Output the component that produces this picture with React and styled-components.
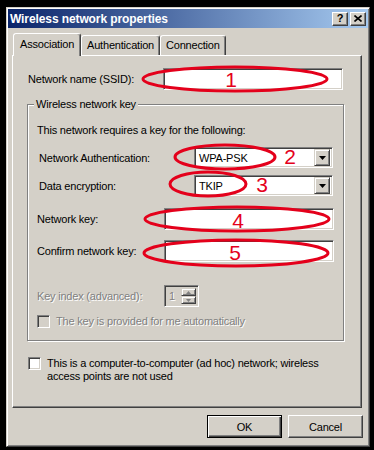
import styled, { createGlobalStyle } from 'styled-components';

const GlobalStyle = createGlobalStyle`
  html, body { margin: 0; padding: 0; background: #000; }
  body {
    font-family: "Liberation Sans", Arial, sans-serif;
    font-size: 11px;
    letter-spacing: -0.2px;
    color: #000;
  }
  * { box-sizing: border-box; }
`;

const Stage = styled.div`
  position: relative;
  width: 374px;
  height: 450px;
  background: #000;
  padding: 7px 4px 3px 6px;
`;

const Window = styled.div`
  width: 364px;
  height: 440px;
  background: #d4d0c8;
  border: 1px solid;
  border-color: #d4d0c8 #404040 #404040 #d4d0c8;
  box-shadow: inset 1px 1px #fff, inset -1px -1px #808080;
  padding: 1px;
  display: flex;
  flex-direction: column;
`;

const TitleBar = styled.div`
  height: 19px;
  display: flex;
  align-items: center;
  padding: 0 2px 0 2px;
  background: linear-gradient(to right, #0a246a, #a6caf0);
`;

const Title = styled.div`
  flex: 1;
  color: #fff;
  font-weight: bold;
  font-size: 12px;
  letter-spacing: -0.1px;
`;

const TitleButton = styled.div`
  width: 16px;
  height: 14px;
  margin-left: 2px;
  background: #d4d0c8;
  border: 1px solid;
  border-color: #fff #404040 #404040 #fff;
  box-shadow: inset -1px -1px #808080;
  display: flex;
  align-items: center;
  justify-content: center;
  font-weight: bold;
  font-size: 11px;
  line-height: 1;
`;

const Body = styled.div`
  padding: 6px 5px 0 4px;
  display: flex;
  flex-direction: column;
`;

const TabRow = styled.div`
  display: flex;
  align-items: flex-end;
  height: 22px;
  padding-left: 1px;
  position: relative;
  z-index: 1;
  margin-bottom: -1px;
`;

const Tab = styled.div`
  height: ${p => (p.$active ? '23px' : '20px')};
  padding: ${p => (p.$active ? '3px 6px 0' : '2px 5px 0')};
  margin-bottom: ${p => (p.$active ? '0' : '1px')};
  background: #d4d0c8;
  border: 1px solid;
  border-bottom: none;
  border-color: #fff #404040 transparent #fff;
  border-radius: 3px 3px 0 0;
  box-shadow: inset -1px 0 #808080;
  white-space: nowrap;
  font-size: 11px;
  line-height: 15px;
`;

const Panel = styled.div`
  width: 350px;
  height: 353px;
  background: #d4d0c8;
  border: 1px solid;
  border-color: #fff #404040 #404040 #fff;
  box-shadow: inset -1px -1px #808080;
  padding: 12px 16px 0 14px;
  display: flex;
  flex-direction: column;
`;

const Row = styled.div`
  display: flex;
  align-items: center;
  height: ${p => p.$h || 22}px;
  margin-top: ${p => p.$mt || 0}px;
`;

const Label = styled.div`
  width: ${p => p.$w}px;
  padding-left: ${p => p.$indent || 0}px;
  color: ${p => (p.$disabled ? '#808080' : '#000')};
  text-shadow: ${p => (p.$disabled ? '1px 1px #fff' : 'none')};
  white-space: nowrap;
`;

const TextBox = styled.div`
  width: ${p => p.$w}px;
  height: 22px;
  background: #fff;
  border: 1px solid;
  border-color: #808080 #fff #fff #808080;
  box-shadow: inset 1px 1px #404040, inset -1px -1px #d4d0c8;
`;

const Combo = styled(TextBox)`
  height: 21px;
  display: flex;
  align-items: center;
  padding: 0 2px 0 4px;
`;

const ComboText = styled.div`
  flex: 1;
`;

const DropButton = styled.div`
  width: 16px;
  height: 17px;
  background: #d4d0c8;
  border: 1px solid;
  border-color: #d4d0c8 #404040 #404040 #d4d0c8;
  box-shadow: inset 1px 1px #fff, inset -1px -1px #808080;
  display: flex;
  align-items: center;
  justify-content: center;
`;

const GroupBox = styled.div`
  margin-top: 14px;
  width: 317px;
  border: 1px solid #808080;
  box-shadow: inset 1px 1px #fff, 1px 1px #fff;
  padding: 0 9px 12px 9px;
  display: flex;
  flex-direction: column;
`;

const Legend = styled.div`
  align-self: flex-start;
  height: 13px;
  line-height: 13px;
  margin: -7px 0 0 -3px;
  padding: 0 2px;
  background: #d4d0c8;
`;

const Text = styled.div`
  line-height: 13px;
  margin-top: ${p => p.$mt || 0}px;
`;

const Spinner = styled.div`
  width: 35px;
  height: 22px;
  display: flex;
  background: #d4d0c8;
  border: 1px solid;
  border-color: #808080 #fff #fff #808080;
  box-shadow: inset 1px 1px #404040, inset -1px -1px #d4d0c8;
  padding: 2px;
`;

const SpinValue = styled.div`
  flex: 1;
  color: #808080;
  text-shadow: 1px 1px #fff;
  padding-left: 2px;
  line-height: 16px;
`;

const SpinButtons = styled.div`
  width: 15px;
  display: flex;
  flex-direction: column;
`;

const SpinButton = styled.div`
  flex: 1;
  background: #d4d0c8;
  border: 1px solid;
  border-color: #d4d0c8 #404040 #404040 #d4d0c8;
  box-shadow: inset 1px 1px #fff, inset -1px -1px #808080;
  display: flex;
  align-items: center;
  justify-content: center;
`;

const CheckRow = styled.div`
  display: flex;
  align-items: ${p => (p.$top ? 'flex-start' : 'center')};
  gap: 6px;
  margin-top: ${p => p.$mt || 0}px;
  margin-left: ${p => p.$ml || 0}px;
`;

const CheckBox = styled.div`
  flex: none;
  width: 13px;
  height: 13px;
  background: ${p => (p.$disabled ? '#d4d0c8' : '#fff')};
  border: 1px solid;
  border-color: #808080 #fff #fff #808080;
  box-shadow: inset 1px 1px #404040, inset -1px -1px #d4d0c8;
`;

const CheckText = styled.div`
  line-height: 13px;
  color: ${p => (p.$disabled ? '#808080' : '#000')};
  text-shadow: ${p => (p.$disabled ? '1px 1px #fff' : 'none')};
`;

const ButtonRow = styled.div`
  display: flex;
  justify-content: flex-end;
  gap: 6px;
  margin-top: 7px;
`;

const Button = styled.div`
  width: 75px;
  height: 23px;
  background: #d4d0c8;
  display: flex;
  align-items: center;
  justify-content: center;
  border: 1px solid;
  border-color: ${p => (p.$default ? '#000' : '#fff #404040 #404040 #fff')};
  box-shadow: ${p =>
    p.$default
      ? 'inset 1px 1px #fff, inset -1px -1px #404040, inset -2px -2px #808080'
      : 'inset -1px -1px #808080'};
  font-size: 11px;
`;

const Annotations = styled.svg`
  position: absolute;
  top: 0;
  left: 0;
  pointer-events: none;
`;

const Number = styled.text`
  font-family: "Liberation Sans", Arial, sans-serif;
  font-size: 21px;
  fill: #e4001b;
`;

const Arrow = ({ up, color = '#000', size = 7 }) => (
  <svg width={size} height={up !== undefined ? 3 : 4} viewBox={up !== undefined ? '0 0 5 3' : '0 0 7 4'}>
    {up === undefined && <polygon points="0,0 7,0 3.5,4" fill={color} />}
    {up === true && <polygon points="0,3 5,3 2.5,0" fill={color} />}
    {up === false && <polygon points="0,0 5,0 2.5,3" fill={color} />}
  </svg>
);

// red hand-drawn annotation marks over the dialog
const marks = [
  { cx: 235, cy: 79, rx: 92, ry: 12, n: '1', x: 231, y: 87 },
  { cx: 225, cy: 157, rx: 50, ry: 12, n: '2', x: 290, y: 164 },
  { cx: 208, cy: 184, rx: 38, ry: 12, n: '3', x: 262, y: 192 },
  { cx: 237, cy: 219, rx: 92, ry: 12, n: '4', x: 238, y: 228 },
  { cx: 236, cy: 253, rx: 92, ry: 13, n: '5', x: 235, y: 260 },
];

export default function App() {
  return (
    <>
      <GlobalStyle />
      <Stage>
        <Window>
          <TitleBar>
            <Title>Wireless network properties</Title>
            <TitleButton>?</TitleButton>
            <TitleButton>
              <svg width="8" height="7" viewBox="0 0 8 7">
                <path d="M0.5 0.5 L7.5 6.5 M7.5 0.5 L0.5 6.5" stroke="#000" strokeWidth="1.6" />
              </svg>
            </TitleButton>
          </TitleBar>
          <Body>
            <TabRow>
              <Tab $active>Association</Tab>
              <Tab>Authentication</Tab>
              <Tab>Connection</Tab>
            </TabRow>
            <Panel>
              <Row>
                <Label $w={136} $indent={1}>Network name (SSID):</Label>
                <TextBox $w={180} />
              </Row>
              <GroupBox>
                <Legend>Wireless network key</Legend>
                <Text $mt={13}>This network requires a key for the following:</Text>
                <Row $h={21} $mt={10}>
                  <Label $w={157} $indent={2}>Network Authentication:</Label>
                  <Combo $w={139}>
                    <ComboText>WPA-PSK</ComboText>
                    <DropButton><Arrow /></DropButton>
                  </Combo>
                </Row>
                <Row $h={21} $mt={7}>
                  <Label $w={157} $indent={2}>Data encryption:</Label>
                  <Combo $w={139}>
                    <ComboText>TKIP</ComboText>
                    <DropButton><Arrow /></DropButton>
                  </Combo>
                </Row>
                <Row $mt={12}>
                  <Label $w={127}>Network key:</Label>
                  <TextBox $w={170} />
                </Row>
                <Row $mt={10}>
                  <Label $w={127}>Confirm network key:</Label>
                  <TextBox $w={170} />
                </Row>
                <Row $mt={23}>
                  <Label $w={127} $disabled>Key index (advanced):</Label>
                  <Spinner>
                    <SpinValue>1</SpinValue>
                    <SpinButtons>
                      <SpinButton><Arrow up color="#808080" size={5} /></SpinButton>
                      <SpinButton><Arrow up={false} color="#808080" size={5} /></SpinButton>
                    </SpinButtons>
                  </Spinner>
                </Row>
                <CheckRow $mt={8}>
                  <CheckBox $disabled />
                  <CheckText $disabled>The key is provided for me automatically</CheckText>
                </CheckRow>
              </GroupBox>
              <CheckRow $top $mt={16} $ml={1}>
                <CheckBox />
                <CheckText>
                  This is a computer-to-computer (ad hoc) network; wireless
                  <br />
                  access points are not used
                </CheckText>
              </CheckRow>
            </Panel>
            <ButtonRow>
              <Button $default>OK</Button>
              <Button>Cancel</Button>
            </ButtonRow>
          </Body>
        </Window>
        <Annotations width="374" height="450" viewBox="0 0 374 450">
          {marks.map(m => (
            <g key={m.n}>
              <ellipse cx={m.cx} cy={m.cy} rx={m.rx} ry={m.ry} fill="none" stroke="#e4001b" strokeWidth="3" />
              <Number x={m.x} y={m.y} textAnchor="middle">{m.n}</Number>
            </g>
          ))}
        </Annotations>
      </Stage>
    </>
  );
}
